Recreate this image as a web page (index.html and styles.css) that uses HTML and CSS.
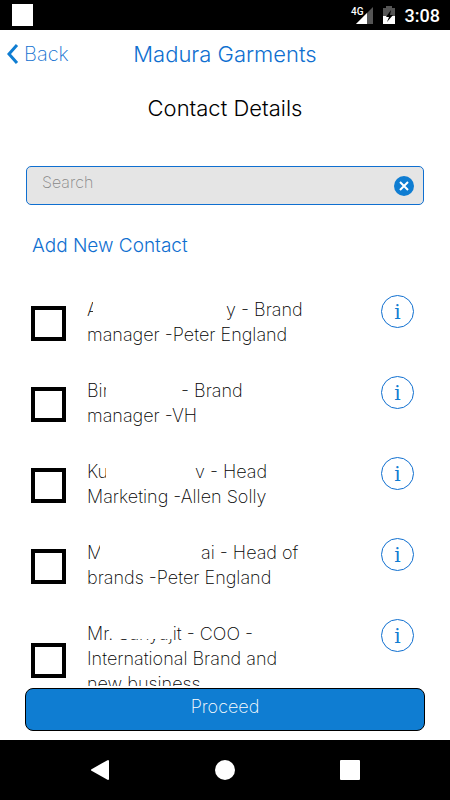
FILE: index.html
```html
<!DOCTYPE html>
<html lang="en">
<head>
    <meta charset="UTF-8">
    <meta name="viewport" content="width=device-width, initial-scale=1.0">
    <title>Contact Details</title>
    <link rel="stylesheet" href="styles.css">
</head>
<body>
<div class="app">
    <div class="status-bar">
        <div class="notification"></div>
        <div class="status-icons">
            <svg width="24" height="20" viewBox="0 0 24 20">
                <path d="M23 2v17H6z" fill="#555"/>
                <path d="M17 8v11H6z" fill="#fff"/>
                <text class="network" x="1" y="10">4G</text>
            </svg>
            <svg class="battery" width="12" height="18" viewBox="0 0 12 18">
                <path d="M3 0h6v2h3v8H0V2h3z" fill="#555"/>
                <path d="M0 10h12v8H0z" fill="#fff"/>
                <path d="M8 4L3 11h3l-2 5 6-7H7z" fill="#000"/>
            </svg>
            <span class="clock">3:08</span>
        </div>
    </div>

    <header class="header-bar">
        <a class="back" href="#">
            <svg width="12" height="20" viewBox="0 0 12 20"><path d="M10 1L2 10l8 9" fill="none" stroke="#0f7dd2" stroke-width="3"/></svg>
            Back
        </a>
        <h1>Madura Garments</h1>
    </header>

    <main>
        <h2>Contact Details</h2>

        <div class="search-box">
            <input type="text" id="search" placeholder="Search" aria-label="Search">
            <button class="clear" aria-label="Clear search">
                <svg width="20" height="20" viewBox="0 0 20 20">
                    <circle cx="10" cy="10" r="10" fill="#0f7dd2"/>
                    <path d="M6 6l8 8M14 6l-8 8" stroke="#fff" stroke-width="2"/>
                </svg>
            </button>
        </div>

        <a class="add-contact" href="#">Add New Contact</a>

        <ul class="contacts">
            <li class="contact">
                <input type="checkbox" id="contact1">
                <label for="contact1"><span class="cut cut-narrow">A</span><span class="blank blank-long"></span>y - Brand<br>manager -Peter England</label>
                <button class="info" aria-label="Details">i</button>
            </li>
            <li class="contact">
                <input type="checkbox" id="contact2">
                <label for="contact2"><span class="cut">Bin</span><span class="blank blank-short"></span>- Brand<br>manager -VH</label>
                <button class="info" aria-label="Details">i</button>
            </li>
            <li class="contact">
                <input type="checkbox" id="contact3">
                <label for="contact3"><span class="cut">Ku</span><span class="blank blank-medium"></span>v - Head<br>Marketing -Allen Solly</label>
                <button class="info" aria-label="Details">i</button>
            </li>
            <li class="contact">
                <input type="checkbox" id="contact4">
                <label for="contact4"><span class="cut cut-medium">M</span><span class="blank blank-wide"></span>ai - Head of<br>brands -Peter England</label>
                <button class="info" aria-label="Details">i</button>
            </li>
            <li class="contact">
                <input type="checkbox" id="contact5">
                <label for="contact5">Mr. <span class="covered">Sanyaj</span>it - COO -<br>International Brand and<br>new business</label>
                <button class="info" aria-label="Details">i</button>
            </li>
        </ul>

        <button class="proceed">Proceed</button>
    </main>

    <nav class="nav-bar">
        <button aria-label="Back"><svg width="20" height="22" viewBox="0 0 20 22"><path d="M18 2v18L2 11z" fill="#fff" stroke="#fff" stroke-width="2" stroke-linejoin="round"/></svg></button>
        <button aria-label="Home"><svg width="20" height="20" viewBox="0 0 20 20"><circle cx="10" cy="10" r="10" fill="#fff"/></svg></button>
        <button aria-label="Recent apps"><svg width="20" height="20" viewBox="0 0 20 20"><rect width="20" height="20" rx="1" fill="#fff"/></svg></button>
    </nav>
</div>
</body>
</html>
```
FILE: styles.css
```css
* {
    box-sizing: border-box;
}

body {
    margin: 0;
    background: #fff;
    color: #000;
    font-family: Inter, "Liberation Sans", sans-serif;
    font-weight: 200;
    font-size: 18px;
    line-height: 25px;
}

a {
    color: #0f6fd0;
    text-decoration: none;
}

button {
    padding: 0;
    border: none;
    background: none;
    cursor: pointer;
    font: inherit;
}

svg {
    display: block;
}

.app {
    display: flex;
    flex-direction: column;
    height: 100vh;
}

.status-bar {
    display: flex;
    justify-content: space-between;
    align-items: center;
    height: 30px;
    padding: 0 10px 0 12px;
    background: #000;
    color: #fff;
}

.notification {
    width: 21px;
    height: 22px;
    background: #fff;
}

.status-icons {
    display: flex;
    align-items: center;
}

.network {
    fill: #fff;
    font: 500 10px Roboto, sans-serif;
}

.battery {
    margin: 0 10px 0 9px;
}

.clock {
    font: 500 18px Roboto, sans-serif;
}

.header-bar {
    display: grid;
    grid-template-columns: 1fr auto 1fr;
    align-items: center;
    height: 48px;
    padding: 0 7px;
}

.back {
    display: flex;
    align-items: center;
    gap: 5px;
    font-size: 20px;
}

h1, h2 {
    margin: 0;
    font-size: 22px;
    font-weight: 300;
    line-height: 30px;
    text-align: center;
}

h1 {
    color: #0f6fd0;
}

main {
    flex: 1;
    min-height: 0;
    display: flex;
    flex-direction: column;
    padding: 15px 25px 9px;
}

.search-box {
    display: flex;
    align-items: center;
    height: 39px;
    margin: 43px 1px 0;
    padding: 0 9px 0 15px;
    border: 1px solid #0f6fd0;
    border-radius: 5px;
    background: #e5e5e5;
}

.search-box input {
    flex: 1;
    min-width: 0;
    height: 100%;
    padding: 0 0 7px;
    border: none;
    outline: none;
    background: none;
    font: inherit;
    font-size: 16px;
}

.search-box input::placeholder {
    color: #888;
}

.add-contact {
    align-self: flex-start;
    margin: 28px 7px 37px;
    font-size: 19px;
    font-weight: 300;
}

.contacts {
    flex: 1;
    min-height: 0;
    overflow: hidden;
    margin: 0;
    padding: 0;
    list-style: none;
}

.contact {
    display: flex;
    align-items: center;
    margin-bottom: 29px;
    padding: 0 11px 0 6px;
}

.contact input {
    appearance: none;
    flex: none;
    width: 35px;
    height: 35px;
    margin: 5px 21px 0 0;
    border: 4px solid #000;
    background: #fff;
}

.contact input:checked {
    background: #0f7dd2;
}

.contact label {
    flex: 1;
    margin-top: 2px;
    white-space: nowrap;
}

.info {
    align-self: flex-start;
    width: 33px;
    height: 33px;
    border: 1px solid #0f6fd0;
    border-radius: 50%;
    color: #0f7dd2;
    font: 20px "DejaVu Serif", serif;
    line-height: 30px;
}

/* hidden parts of the names */
.cut, .blank {
    display: inline-block;
    height: 25px;
    overflow: hidden;
    vertical-align: top;
}

.cut {
    width: 19px;
}

.cut-narrow {
    width: 6px;
}

.cut-medium {
    width: 13px;
}

.blank-long {
    width: 133px;
}

.blank-wide {
    width: 101px;
}

.blank-medium {
    width: 89px;
}

.blank-short {
    width: 75px;
}

.covered {
    position: relative;
}

.covered::after {
    content: "";
    position: absolute;
    left: 0;
    right: 0;
    top: 0;
    height: 16px;
    background: #fff;
}

.proceed {
    flex: none;
    height: 43px;
    margin-top: 2px;
    padding-bottom: 6px;
    border: 1px solid #000;
    border-radius: 8px;
    background: #0f7dd2;
    color: #fff;
}

.nav-bar {
    display: flex;
    justify-content: center;
    align-items: center;
    gap: 105px;
    height: 60px;
    background: #000;
}
```
